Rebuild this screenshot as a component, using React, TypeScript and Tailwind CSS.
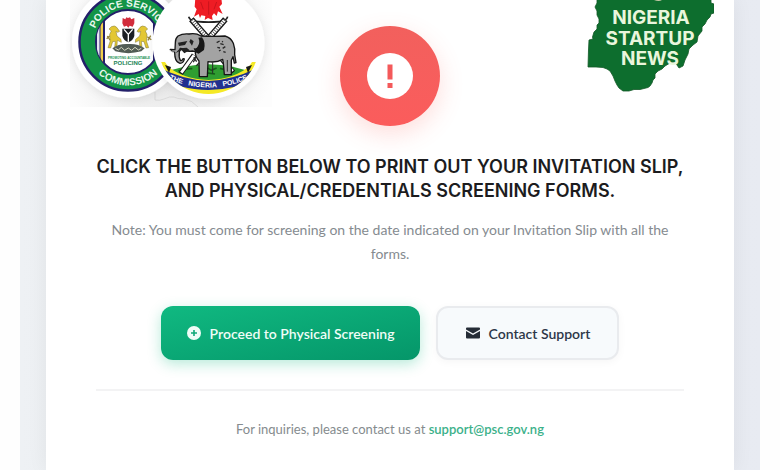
import React from 'react';

function AgencyLogos() {
  return (
    <svg width="206" height="107" viewBox="66 0 206 107" role="img" aria-label="Police Service Commission and The Nigeria Police">
      <defs>
        <radialGradient id="haze" gradientUnits="userSpaceOnUse" cx="168" cy="46" r="110">
          <stop offset="0.3" stopColor="#e6e6e6" />
          <stop offset="0.72" stopColor="#f4f4f4" />
          <stop offset="1" stopColor="#fdfdfd" />
        </radialGradient>
        <filter id="soft" x="-20%" y="-20%" width="140%" height="140%">
          <feDropShadow dx="0" dy="2" stdDeviation="4" floodColor="#000000" floodOpacity="0.08" />
        </filter>
        <clipPath id="sealClip"><circle cx="128" cy="42" r="32" /></clipPath>
        <clipPath id="policeClip"><circle cx="208.500" cy="43" r="51" /></clipPath>
        <path id="arcTop" d="M92.500 42a35.500 35.500 0 0 1 71 0" />
        <path id="arcBottom" d="M84.500 42a43.500 43.500 0 0 0 87 0" />
        <path id="arcBanner" d="M158 73Q180 87 208.500 87.500Q237 87 259 73" />
      </defs>

      <rect x="70" y="0" width="202" height="107" fill="url(#haze)" />
      <path d="M155 92v8q4 1 9-1 6-3 10-2 3 2 10 2 8 1 14 8" fill="none" stroke="#cfcfcf" strokeWidth="0.6" />

      {/* commission seal */}
      <circle cx="128" cy="42" r="56" fill="#fff" filter="url(#soft)" />
      <circle cx="128" cy="42" r="48.500" fill="#129447" stroke="#24206a" strokeWidth="2.500" />
      <circle cx="128" cy="42" r="32" fill="#fff" stroke="#24206a" strokeWidth="2" />
      <g clipPath="url(#sealClip)">
        <rect x="95" y="8" width="10" height="70" fill="#24206a" />
        <rect x="97" y="8" width="2.500" height="70" fill="#e8e6f2" />
        <rect x="100.500" y="8" width="2.500" height="70" fill="#f0cf4a" />
        <rect x="153" y="8" width="10" height="70" fill="#24206a" />
      </g>
      <g transform="translate(70 0) scale(0.3333)">
        <path d="M174 54l6-2 4 6 9-4v16l-5 10-9-3-4 6-5-6-8 3-5-10 1-16 8 4 3-6z" fill="#d22c3c" />
        <path d="M157 86h36v22q-4 14-18 19-14-5-18-19z" fill="#1c1f24" />
        <path d="M162 88l13 15 13-15M175 103v22" stroke="#fff" strokeWidth="4" fill="none" />
        <path d="M124 80q10-5 16 2l9 12-6 3-5-3 3 14 12 10 1 9-12-6-1 16-7 4 2-17-8 1-6 19-8-1 6-18-1-22 5-10-7-6z" fill="#e3c733" stroke="#7b7430" strokeWidth="1.500" />
        <path d="M226 80q-10-5-16 2l-9 12 6 3 5-3-3 14-12 10-1 9 12-6 1 16 7 4-2-17 8 1 6 19 8-1-6-18 1-22-5-10 7-6z" fill="#e3c733" stroke="#7b7430" strokeWidth="1.500" />
        <path d="M110 116l9-8M112 108l8 12M232 110l12 9M242 107l-8 14" stroke="#96843b" strokeWidth="4" />
        <path d="M127 145q20-15 48-13 28-2 49 13l-10 9q-39 11-78 0z" fill="#525c55" />
        <path d="M136 145l9 5 9-8 10 9 11-7 10 7 10-9 10 8 9-5" stroke="#d7d8c2" strokeWidth="3" fill="none" />
      </g>
      <g fontFamily="Liberation Sans, sans-serif" fontWeight="700" textAnchor="middle">
        <text x="129" y="59" fontSize="3" fill="#159150">PROMOTING ACCOUNTABLE</text>
        <text x="128" y="65" fontSize="6" fill="#1c8355">POLICING</text>
        <text fontSize="10" fill="#e9f7ee"><textPath href="#arcTop" startOffset="50%">POLICE SERVICE</textPath></text>
        <text fontSize="10" fill="#e9f7ee"><textPath href="#arcBottom" startOffset="50%">COMMISSION</textPath></text>
      </g>

      {/* police crest */}
      <circle cx="208.500" cy="43" r="56" fill="#fff" filter="url(#soft)" />
      <g clipPath="url(#policeClip)">
        <g transform="translate(150 0) scale(0.3333)">
          <path d="M136-6h78l2 18-8 8 10 22-14-8-4 14-8-8-6 8 2 12-14-6-10 6 2-12-12-2-4 8-4-12-14 8 8-22-6-8z" fill="#ee1c24" />
          <path d="M152 6l8 22M200 6l-8 22M176 4v40" stroke="#c9141c" strokeWidth="3" />
          <path d="M116 50q4 14 28 15 32 3 64 0 22-2 25-15" stroke="#222" strokeWidth="5" fill="none" />
          <path d="M124 58l56 64M226 58l-56 64" stroke="#181818" strokeWidth="18" />
          <path d="M126 60l54 62M224 60l-54 62" stroke="#fff" strokeWidth="10" />
          <path d="M126 60l54 62M224 60l-54 62" stroke="#333" strokeWidth="10" strokeDasharray="2 5" />
          <path d="M38 221q60-27 137-28 77 1 137 28l-70 28H105z" fill="#2f9e31" />
          <path d="M85 213q20-8 42-7M240 213l-30-8M170 202l14 9 16-7M165 218l30 4" stroke="#155d1a" strokeWidth="5" fill="none" />
          <path d="M92 221l40-56M250 217l-44-50" stroke="#181818" strokeWidth="15" />
          <path d="M94 218l38-52M248 214l-42-48" stroke="#fff" strokeWidth="9" />
          <path
            d="M84 108q14-8 33-6 21-4 36 6 38 2 72 0 18 5 25 22 6 16 4 34l4 24-5 1-4-19-5 11v43h-21l-3-35-2-11q-19 11-44 7l-2 45h-24l-1-47q-12-14-11-28l-9-2q-20 3-27-6l-9-2-3 12q-2 16 3 24 6 2 8-5l4 1q-2 12-13 13-12-3-15-19l-1-14-14-5 1-4 14 1 1-21q0-13 8-20z"
            fill="#a3a3a3" stroke="#161616" strokeWidth="4" strokeLinejoin="round"
          />
          <path d="M156 112q12 16 6 38l-16 11q-12-2-15-17 9 4 13-6 7-12 1-25z" fill="#171717" />
          <path d="M84 128l28-5-7 12-18 3zM90 145l20-2 9 8-16 9-8-9-18 8zM122 117l9 7-5 13-8-12z" fill="#222" />
          <path d="M63 153l-13-5M72 157l-15-3" stroke="#fff" strokeWidth="3" />
          <path d="M200 128l9-5M211 131l10 3M202 142l8 2M218 145l8-5M207 153l5-3M220 155l7 2M216 124l3 2M131 172l9 13M139 168l-9 19M148 188l-9 9" stroke="#292929" strokeWidth="4" />
          <path d="M232 180v35M188 187v33" stroke="#292929" strokeWidth="3" />
        </g>
        <path d="M156 64L166 65Q182 79 208.500 80Q235 79 251 65L261 64V82Q238 95 208.500 95Q179 95 156 82Z" fill="#f5e926" />
        <path d="M156 66Q182 80 208.500 81Q235 80 261 66V76Q238 90 208.500 90Q179 90 156 76Z" fill="#21308f" />
        <path d="M156 62h9l4 6-6 3-7-2zM261 62h-9l-4 6 6 3 7-2z" fill="#f5e926" />
        <path d="M165 65l6 2-2 6zM252 65l-6 2 2 6z" fill="#191919" />
        <text fontFamily="Liberation Sans, sans-serif" fontSize="7" fontWeight="700" fill="#fff" textAnchor="middle">
          <textPath href="#arcBanner" startOffset="50%">THE&#160;&#160; NIGERIA&#160;&#160; POLICE</textPath>
        </text>
      </g>
    </svg>
  );
}

function StartupNewsLogo() {
  return (
    <svg width="130" height="94" viewBox="584 0 130 94" role="img" aria-label="Nigeria Startup News">
      <path
        d="M597 -1L597 3L595 7L597 11L597 15L599 19L599 23L597 25L597 29L594 32L592.500 37L593 39L589 40L588.500 50L588 67L596 67L603 67.500L607 69L610 71L613 76L615 81L617 85L619 88L623 91L629 91L634 89.500L640 89.500L648 87.500L650 86L652 83L653 80L655 78L655 74L658 71L662 69L665 66L670 63L675 62L677 65L679 68L681 67L683 66L685 60L688 54L689 49L693 45L697 42L698 36L702 31L702 27L705 24L707 20L710 17L711 14L714 13L714 4L711 3L711 -1Z"
        fill="#0d6e2e" stroke="#135927" strokeWidth="0.800"
      />
      <path d="M654 0q5 2 8 0z" fill="#c9c9a8" />
      <g fontFamily="Inter, sans-serif" fontWeight="700" fontSize="19" fill="#e9f6dc" textAnchor="middle">
        <text x="651" y="24">NIGERIA</text>
        <text x="650" y="45">STARTUP</text>
        <text x="650" y="65">NEWS</text>
      </g>
    </svg>
  );
}

function AlertBadge() {
  return (
    <div className="mt-[26px] flex size-[100px] items-center justify-center rounded-full bg-linear-to-b from-[#f2605d] to-[#fb5c5c] shadow-[0_8px_24px_rgba(250,90,82,0.2)]">
      <svg width="46" height="46" viewBox="0 0 46 46" aria-hidden="true">
        <circle cx="23" cy="23" r="23" fill="#fff" />
        <path d="M20.500 11.500h5v15h-5zM20.500 30h5v5h-5z" fill="#f4595a" />
      </svg>
    </div>
  );
}

export default function App() {
  return (
    <div className="min-h-screen bg-[#fefefe] px-5 font-[Lato,sans-serif]">
      <div className="flex min-h-screen bg-linear-to-r from-[#eef1f4] via-[#e4e6ea] to-[#e8ebf2] px-[26px]">
        <main className="flex-1 bg-white text-center shadow-[0_0_20px_rgba(0,0,0,0.06)]">
          <header className="grid grid-cols-[1fr_auto_1fr] items-start px-5">
            <AgencyLogos />
            <AlertBadge />
            <div className="flex justify-end">
              <StartupNewsLogo />
            </div>
          </header>

          <div className="px-[50px]">
            <h1 className="mt-[29px] font-[Inter,sans-serif] text-[18px] leading-6 font-semibold text-[#1c1c1e]">
              CLICK THE BUTTON BELOW TO PRINT OUT YOUR INVITATION SLIP, AND PHYSICAL/CREDENTIALS SCREENING FORMS.
            </h1>
            <p className="mt-[15px] px-3 text-[14px] leading-6 text-[#858b90]">
              Note: You must come for screening on the date indicated on your Invitation Slip with all the forms.
            </p>

            <div className="mt-10 flex flex-wrap justify-center gap-4">
              <button
                type="button"
                className="flex h-[54px] items-center gap-2 rounded-xl bg-linear-to-br from-[#10b981] to-[#059669] px-[25px] text-[14px] font-semibold text-[#effdf7] shadow-[0_4px_14px_rgba(16,185,129,0.3)]"
              >
                <svg width="16" height="16" viewBox="0 0 16 16" aria-hidden="true">
                  <circle cx="8" cy="8" r="7" fill="#effdf7" />
                  <path d="M8 5v6M5 8h6" stroke="#10a878" strokeWidth="1.600" />
                </svg>
                Proceed to Physical Screening
              </button>
              <button
                type="button"
                className="flex h-[54px] items-center gap-2 rounded-xl border-2 border-[#e9ebee] bg-[#f7fafc] px-[27px] text-[14px] font-semibold text-[#2d3748] shadow-[0_2px_8px_rgba(0,0,0,0.04)]"
              >
                <svg width="16" height="16" viewBox="0 0 16 16" aria-hidden="true">
                  <path d="M2 2.500h12q1 0 1 1v1L8 8.500 1 4.500v-1q0-1 1-1zM1 6l7 4 7-4v6.500q0 1-1 1H2q-1 0-1-1z" fill="#252c36" />
                </svg>
                Contact Support
              </button>
            </div>

            <footer className="mt-[29px] border-t-2 border-[#f3f3f4] pt-7 text-[13px] leading-5 text-[#858b8e]">
              For inquiries, please contact us at{' '}
              <a href="mailto:support@psc.gov.ng" className="font-semibold text-[#3cb18a]">support@psc.gov.ng</a>
            </footer>
          </div>
        </main>
      </div>
    </div>
  );
}
